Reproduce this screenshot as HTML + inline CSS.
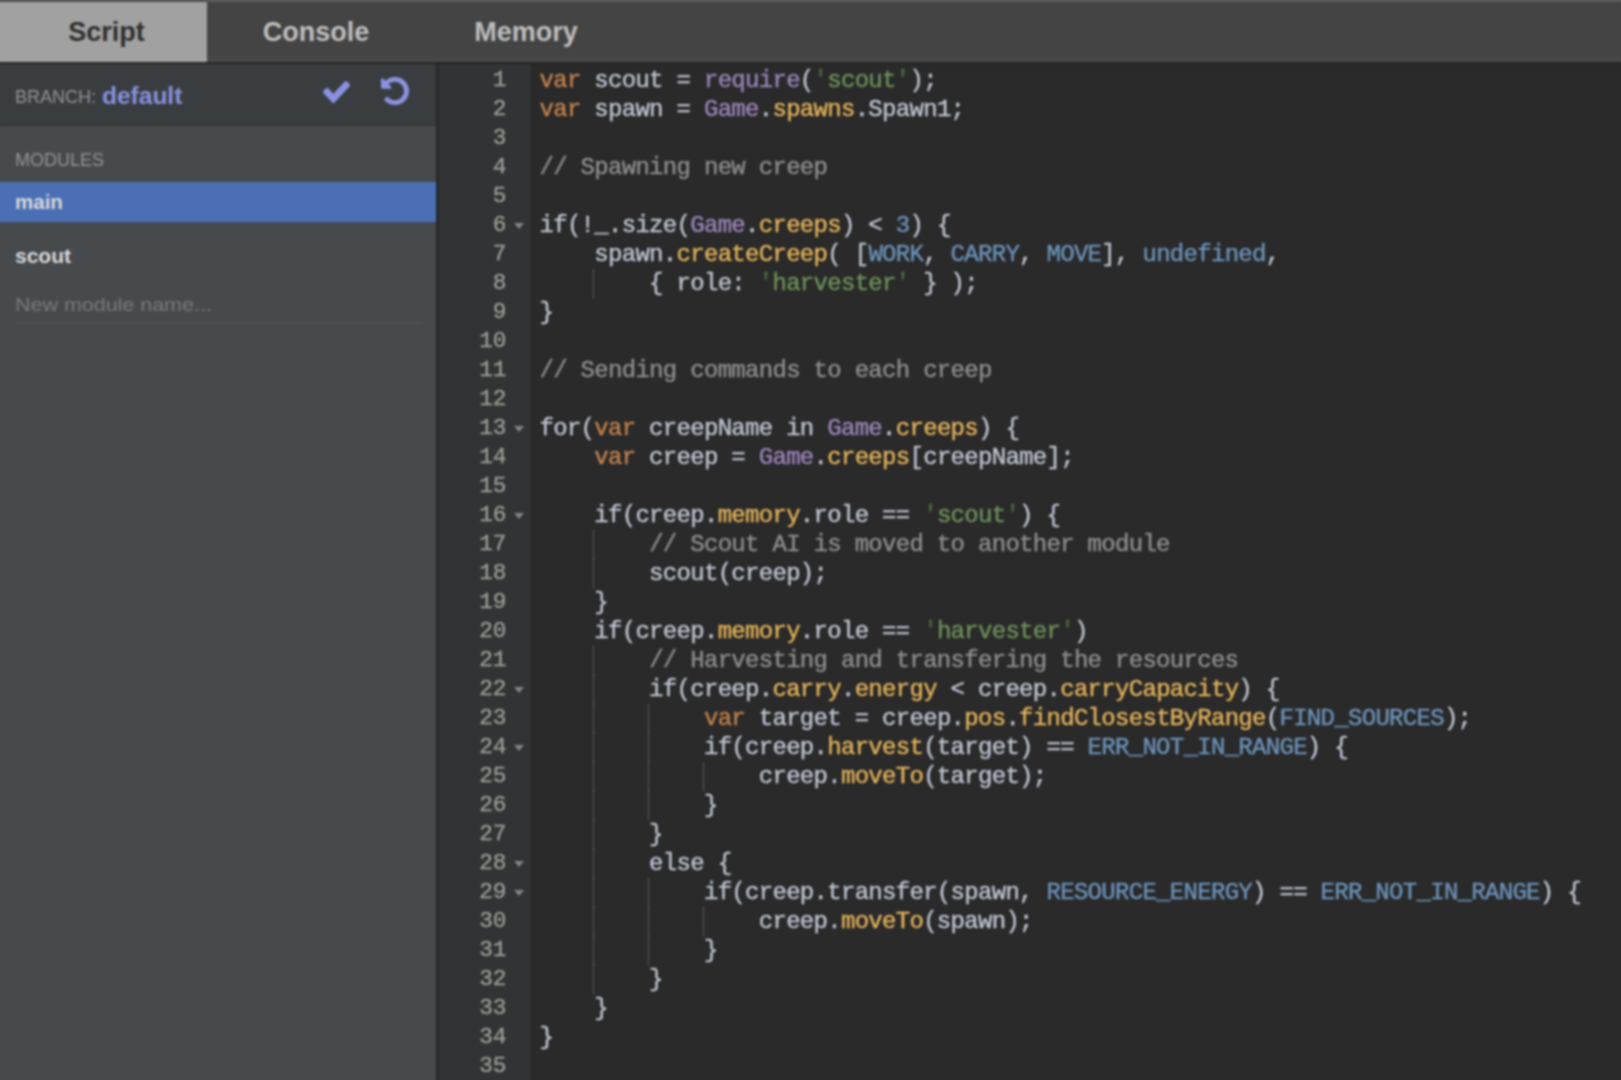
<!DOCTYPE html>
<html><head><meta charset="utf-8">
<style>
html,body{margin:0;padding:0;}
body{width:1621px;height:1080px;overflow:hidden;position:relative;background:#2a2a2a;font-family:"Liberation Sans",sans-serif;}
#tabs{position:absolute;left:0;top:0;width:1621px;height:63px;background:linear-gradient(#444444 0,#444444 54px,#484848 57px,#484848 62px);border-top:2px solid #5c5c5c;box-sizing:border-box;}
.tab{position:absolute;top:0;height:61px;line-height:61px;text-align:center;font-weight:bold;font-size:27px;color:#bdbdbd;}
.tab.act{background:#a1a1a1;color:#303030;}
#tabline{position:absolute;left:0;top:62px;width:1621px;height:2px;background:#262626;}
#side{position:absolute;left:0;top:63px;width:436px;height:1017px;background:#474a4d;}
#branch{position:absolute;left:0;top:0;width:436px;height:61px;background:#3a3d40;border-bottom:2px solid #37363b;box-shadow:0 1px 0 #4b4b4f;}
#sideborder{position:absolute;left:434px;top:63px;width:2px;height:1017px;background:#2f3133;}
.lbl{position:absolute;font-size:18px;color:#8e9193;white-space:nowrap;}
.bname{position:absolute;font-size:24.5px;font-weight:bold;color:#8791dd;white-space:nowrap;}
#sel{position:absolute;left:0;top:119px;width:436px;height:40px;background:#4a6fb4;}
.mod{position:absolute;font-weight:bold;font-size:20.5px;color:#d8d8d8;white-space:nowrap;}
.ph{position:absolute;font-size:18.5px;transform:scaleX(1.16);transform-origin:0 0;color:#75787b;white-space:nowrap;}
#uline{position:absolute;left:15px;top:260px;width:408px;height:1px;background:#55595c;}
#gutter{position:absolute;left:436px;top:63px;width:95px;height:1017px;background:#313335;}
.gn{position:absolute;left:437.5px;width:69px;-webkit-text-stroke:0.3px currentColor;text-align:right;font-family:"Liberation Mono",monospace;font-size:22.8px;line-height:29px;height:29px;color:#9aa093;}
.fold{position:absolute;left:514px;width:0;height:0;margin-top:12px;border-left:5px solid transparent;border-right:5px solid transparent;border-top:6px solid #858585;}
.ln{position:absolute;left:539.5px;font-family:"Liberation Mono",monospace;font-size:24px;letter-spacing:-0.7px;line-height:29px;height:29px;white-space:pre;color:#bfc5d2;-webkit-text-stroke:0.4px currentColor;}
.ig{position:absolute;width:0;height:29px;border-left:1px dotted #8a8a8a;}
.k{color:#c4834e;}
.p{color:#9c86bb;}
.f{color:#e5b45a;}
.n{color:#6c94bb;}
.s{color:#6e925a;}
.q{color:#4e6a42;}
.c{color:#8e8e8e;}
svg{position:absolute;}
</style></head><body><div id="root" style="position:absolute;left:0;top:0;width:1621px;height:1080px;filter:blur(1px);">
<div style="position:absolute;left:-12px;top:-12px;width:1645px;height:12px;background:#5c5c5c;"></div><div style="position:absolute;left:-12px;top:-12px;width:219px;height:12px;background:#4e4e4e;"></div><div style="position:absolute;left:-12px;top:0;width:12px;height:63px;background:#a1a1a1;border-top:2px solid #4e4e4e;box-sizing:border-box;"></div><div style="position:absolute;left:-12px;top:63px;width:12px;height:1030px;background:#474a4d;"></div><div style="position:absolute;left:-12px;top:62px;width:12px;height:64px;background:#3a3d40;border-top:1px solid #262626;border-bottom:1px solid #2e3033;"></div><div style="position:absolute;left:-12px;top:182px;width:12px;height:40px;background:#4a6fb4;"></div><div style="position:absolute;left:0;top:1080px;width:1633px;height:12px;background:#2a2a2a;"></div><div style="position:absolute;left:436px;top:1080px;width:95px;height:12px;background:#313335;"></div><div style="position:absolute;left:0;top:1080px;width:436px;height:12px;background:#474a4d;"></div><div style="position:absolute;left:1621px;top:-12px;width:12px;height:75px;background:#444;"></div>
<div id="tabs">
<div class="tab act" style="left:0;top:-2px;height:63px;border-top:2px solid #4e4e4e;box-sizing:border-box;line-height:61px;width:207px;text-indent:6px;">Script</div>
<div class="tab" style="left:211px;width:210px;">Console</div>
<div class="tab" style="left:421px;width:210px;">Memory</div>
</div>
<div id="side">
<div id="branch">
<div class="lbl" style="left:15px;top:23.5px;">BRANCH:</div>
<div class="bname" style="left:102px;top:18.5px;">default</div>
</div>
<div class="lbl" style="left:15px;top:86.5px;">MODULES</div>
<div id="sel"></div>
<div class="mod" style="left:15px;top:127px;">main</div>
<div class="mod" style="left:15px;top:181px;font-size:21px;">scout</div>
<div class="ph" style="left:15px;top:231px;">New module name...</div>
<div id="uline"></div>
</div>
<svg style="left:323px;top:81px" width="27" height="22" viewBox="121 334 1550 1188" preserveAspectRatio="none"><path fill="#8a91e0" d="M1671 566q0 40-28 68l-724 724-136 136q-28 28-68 28t-68-28l-136-136-362-362q-28-28-28-68t28-68l136-136q28-28 68-28t68 28l294 295 656-657q28-28 68-28t68 28l136 136q28 28 28 68z"/></svg>
<svg style="left:381px;top:77px" width="28" height="28" viewBox="0 0 1536 1536"><path fill="#8a91e0" d="M1536 768q0 156-61 298t-164 245-245 164-298 61q-172 0-327-72.5T177 1258q-7-10-6.5-22.5T179 1215l137-138q10-9 25-9 16 2 23 12 73 95 179 147t225 52q104 0 198.5-40.5T1110 1130t109.5-163.5T1260 768t-40.5-198.5T1110 406 946.5 296.5 768 256q-98 0-188 35.5T420 393l137 138q31 30 14 69-17 40-59 40H64q-26 0-45-19t-19-45V128q0-42 40-59 39-17 69 14l130 129q107-101 244.5-156.5T768 0q156 0 298 61t245 164 164 245 61 298z"/></svg>
<div id="gutter"></div><div style="position:absolute;left:436px;top:63px;width:3px;height:1030px;background:#27292b;"></div>
<div class="gn" style="top:66px">1</div>
<div class="gn" style="top:95px">2</div>
<div class="gn" style="top:124px">3</div>
<div class="gn" style="top:153px">4</div>
<div class="gn" style="top:182px">5</div>
<div class="gn" style="top:211px">6</div>
<div class="fold" style="top:211px"></div>
<div class="gn" style="top:240px">7</div>
<div class="gn" style="top:269px">8</div>
<div class="gn" style="top:298px">9</div>
<div class="gn" style="top:327px">10</div>
<div class="gn" style="top:356px">11</div>
<div class="gn" style="top:385px">12</div>
<div class="gn" style="top:414px">13</div>
<div class="fold" style="top:414px"></div>
<div class="gn" style="top:443px">14</div>
<div class="gn" style="top:472px">15</div>
<div class="gn" style="top:501px">16</div>
<div class="fold" style="top:501px"></div>
<div class="gn" style="top:530px">17</div>
<div class="gn" style="top:559px">18</div>
<div class="gn" style="top:588px">19</div>
<div class="gn" style="top:617px">20</div>
<div class="gn" style="top:646px">21</div>
<div class="gn" style="top:675px">22</div>
<div class="fold" style="top:675px"></div>
<div class="gn" style="top:704px">23</div>
<div class="gn" style="top:733px">24</div>
<div class="fold" style="top:733px"></div>
<div class="gn" style="top:762px">25</div>
<div class="gn" style="top:791px">26</div>
<div class="gn" style="top:820px">27</div>
<div class="gn" style="top:849px">28</div>
<div class="fold" style="top:849px"></div>
<div class="gn" style="top:878px">29</div>
<div class="fold" style="top:878px"></div>
<div class="gn" style="top:907px">30</div>
<div class="gn" style="top:936px">31</div>
<div class="gn" style="top:965px">32</div>
<div class="gn" style="top:994px">33</div>
<div class="gn" style="top:1023px">34</div>
<div class="gn" style="top:1052px">35</div>
<div class="ig" style="left:593.3px;top:269px"></div>
<div class="ig" style="left:593.3px;top:530px"></div>
<div class="ig" style="left:593.3px;top:559px"></div>
<div class="ig" style="left:593.3px;top:646px"></div>
<div class="ig" style="left:593.3px;top:675px"></div>
<div class="ig" style="left:593.3px;top:704px"></div>
<div class="ig" style="left:648.1px;top:704px"></div>
<div class="ig" style="left:593.3px;top:733px"></div>
<div class="ig" style="left:648.1px;top:733px"></div>
<div class="ig" style="left:593.3px;top:762px"></div>
<div class="ig" style="left:648.1px;top:762px"></div>
<div class="ig" style="left:702.9px;top:762px"></div>
<div class="ig" style="left:593.3px;top:791px"></div>
<div class="ig" style="left:648.1px;top:791px"></div>
<div class="ig" style="left:593.3px;top:820px"></div>
<div class="ig" style="left:593.3px;top:849px"></div>
<div class="ig" style="left:593.3px;top:878px"></div>
<div class="ig" style="left:648.1px;top:878px"></div>
<div class="ig" style="left:593.3px;top:907px"></div>
<div class="ig" style="left:648.1px;top:907px"></div>
<div class="ig" style="left:702.9px;top:907px"></div>
<div class="ig" style="left:593.3px;top:936px"></div>
<div class="ig" style="left:648.1px;top:936px"></div>
<div class="ig" style="left:593.3px;top:965px"></div>
<div class="ln" style="top:66px"><span class="k">var</span> scout = <span class="p">require</span>(<span class="q">'</span><span class="s">scout</span><span class="q">'</span>);</div>
<div class="ln" style="top:95px"><span class="k">var</span> spawn = <span class="p">Game</span>.<span class="f">spawns</span>.Spawn1;</div>
<div class="ln" style="top:124px"></div>
<div class="ln" style="top:153px"><span class="c">// Spawning new creep</span></div>
<div class="ln" style="top:182px"></div>
<div class="ln" style="top:211px">if(!_.size(<span class="p">Game</span>.<span class="f">creeps</span>) &lt; <span class="n">3</span>) {</div>
<div class="ln" style="top:240px">    spawn.<span class="f">createCreep</span>( [<span class="n">WORK</span>, <span class="n">CARRY</span>, <span class="n">MOVE</span>], <span class="n">undefined</span>,</div>
<div class="ln" style="top:269px">        { role: <span class="q">'</span><span class="s">harvester</span><span class="q">'</span> } );</div>
<div class="ln" style="top:298px">}</div>
<div class="ln" style="top:327px"></div>
<div class="ln" style="top:356px"><span class="c">// Sending commands to each creep</span></div>
<div class="ln" style="top:385px"></div>
<div class="ln" style="top:414px">for(<span class="k">var</span> creepName in <span class="p">Game</span>.<span class="f">creeps</span>) {</div>
<div class="ln" style="top:443px">    <span class="k">var</span> creep = <span class="p">Game</span>.<span class="f">creeps</span>[creepName];</div>
<div class="ln" style="top:472px"></div>
<div class="ln" style="top:501px">    if(creep.<span class="f">memory</span>.role == <span class="q">'</span><span class="s">scout</span><span class="q">'</span>) {</div>
<div class="ln" style="top:530px">        <span class="c">// Scout AI is moved to another module</span></div>
<div class="ln" style="top:559px">        scout(creep);</div>
<div class="ln" style="top:588px">    }</div>
<div class="ln" style="top:617px">    if(creep.<span class="f">memory</span>.role == <span class="q">'</span><span class="s">harvester</span><span class="q">'</span>)</div>
<div class="ln" style="top:646px">        <span class="c">// Harvesting and transfering the resources</span></div>
<div class="ln" style="top:675px">        if(creep.<span class="f">carry</span>.<span class="f">energy</span> &lt; creep.<span class="f">carryCapacity</span>) {</div>
<div class="ln" style="top:704px">            <span class="k">var</span> target = creep.<span class="f">pos</span>.<span class="f">findClosestByRange</span>(<span class="n">FIND_SOURCES</span>);</div>
<div class="ln" style="top:733px">            if(creep.<span class="f">harvest</span>(target) == <span class="n">ERR_NOT_IN_RANGE</span>) {</div>
<div class="ln" style="top:762px">                creep.<span class="f">moveTo</span>(target);</div>
<div class="ln" style="top:791px">            }</div>
<div class="ln" style="top:820px">        }</div>
<div class="ln" style="top:849px">        else {</div>
<div class="ln" style="top:878px">            if(creep.transfer(spawn, <span class="n">RESOURCE_ENERGY</span>) == <span class="n">ERR_NOT_IN_RANGE</span>) {</div>
<div class="ln" style="top:907px">                creep.<span class="f">moveTo</span>(spawn);</div>
<div class="ln" style="top:936px">            }</div>
<div class="ln" style="top:965px">        }</div>
<div class="ln" style="top:994px">    }</div>
<div class="ln" style="top:1023px">}</div>
<div class="ln" style="top:1052px"></div>
<div id="tabline"></div>
</div></body></html>
